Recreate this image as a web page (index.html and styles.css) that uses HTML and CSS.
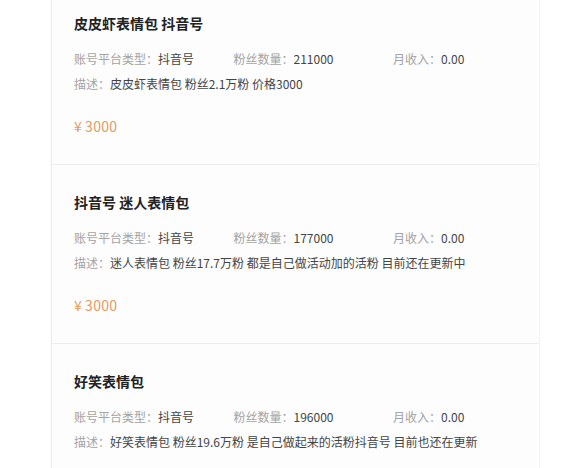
FILE: index.html
```html
<!DOCTYPE html>
<html lang="zh">
<head>
<meta charset="utf-8">
<link rel="stylesheet" href="styles.css">
</head>
<body>
<div class="list">
  <div class="card">
    <div class="title">皮皮虾表情包 抖音号</div>
    <div class="meta">
      <div class="col"><span class="label">账号平台类型：</span><span class="val">抖音号</span></div>
      <div class="col"><span class="label">粉丝数量：</span><span class="val">211000</span></div>
      <div class="col"><span class="label">月收入：</span><span class="val">0.00</span></div>
    </div>
    <div class="desc"><span class="label">描述：</span><span class="val">皮皮虾表情包 粉丝2.1万粉 价格3000</span></div>
    <div class="price"><span class="yen">¥</span>3000</div>
  </div>
  <div class="card">
    <div class="title">抖音号 迷人表情包</div>
    <div class="meta">
      <div class="col"><span class="label">账号平台类型：</span><span class="val">抖音号</span></div>
      <div class="col"><span class="label">粉丝数量：</span><span class="val">177000</span></div>
      <div class="col"><span class="label">月收入：</span><span class="val">0.00</span></div>
    </div>
    <div class="desc"><span class="label">描述：</span><span class="val">迷人表情包 粉丝17.7万粉 都是自己做活动加的活粉 目前还在更新中</span></div>
    <div class="price"><span class="yen">¥</span>3000</div>
  </div>
  <div class="card">
    <div class="title">好笑表情包</div>
    <div class="meta">
      <div class="col"><span class="label">账号平台类型：</span><span class="val">抖音号</span></div>
      <div class="col"><span class="label">粉丝数量：</span><span class="val">196000</span></div>
      <div class="col"><span class="label">月收入：</span><span class="val">0.00</span></div>
    </div>
    <div class="desc"><span class="label">描述：</span><span class="val">好笑表情包 粉丝19.6万粉 是自己做起来的活粉抖音号 目前也还在更新</span></div>
  </div>
</div>
</body>
</html>
```
FILE: styles.css
```css
html, body {
  margin: 0;
  padding: 0;
  background: #ffffff;
  font-family: "Noto Sans CJK SC", "Noto Sans", sans-serif;
  overflow: hidden;
  height: 468px;
}
.list {
  margin-top: -14px;
  margin-left: 51px;
  width: 487px;
  background: #fdfdfd;
  border-left: 1px solid #ececec;
  border-right: 1px solid #f4f4f4;
}
.card {
  height: 179px;
  box-sizing: border-box;
  padding: 27px 0 0 22px;
  border-bottom: 1px solid #eeeeee;
}
.title {
  font-size: 14px;
  font-weight: bold;
  line-height: 20px;
  color: #222222;
}
.meta {
  display: flex;
  margin-top: 16px;
  font-size: 12px;
  line-height: 20px;
}
.col {
  flex: none;
  width: 159.5px;
}
.desc {
  margin-top: 5px;
  font-size: 12px;
  line-height: 20px;
}
.label {
  color: #a3a3a3;
}
.val {
  color: #444444;
}
.price {
  margin-top: 22px;
  font-size: 14px;
  line-height: 20px;
  color: #e39a62;
  letter-spacing: 0.3px;
}
.yen {
  margin-right: 3px;
}
```
